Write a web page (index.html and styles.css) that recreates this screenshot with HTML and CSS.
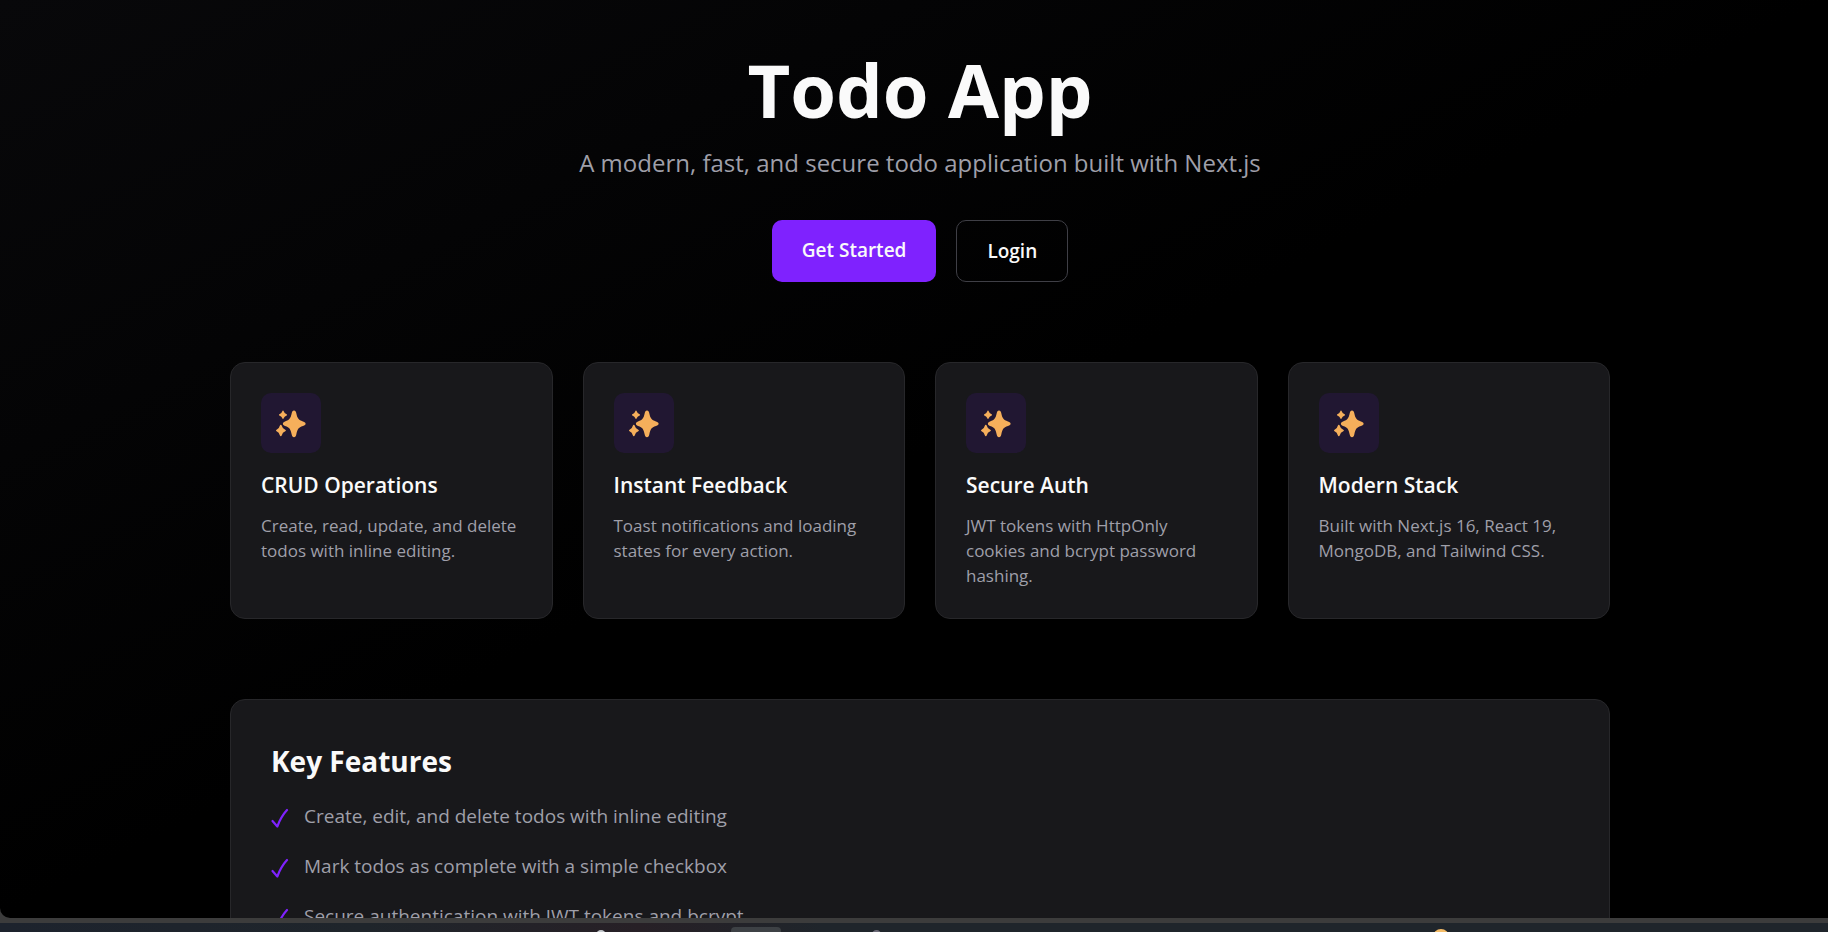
FILE: index.html
```html
<!DOCTYPE html>
<html lang="en">
<head>
    <meta charset="UTF-8">
    <meta name="viewport" content="width=device-width, initial-scale=1.0">
    <title>Todo App</title>
    <link rel="stylesheet" href="styles.css">
</head>
<body>
    <!-- icons shared by the cards and the list -->
    <svg width="0" height="0" class="sprite" aria-hidden="true">
        <symbol id="sparkles" viewBox="0 -1 30 30">
            <path d="M18 1.500 C19.300 1.500 19.900 2.600 20.300 4.200 C21.400 9.200 22.200 10.800 27 12.400 C28.700 13 29.600 13.700 29.600 14.700 C29.600 15.700 28.700 16.400 27 17 C22.200 18.600 21.400 20.200 20.300 25.500 C19.900 27.300 19.300 28.300 18 28.300 C16.700 28.300 16.100 27.300 15.700 25.500 C14.600 20.200 13.800 18.600 9 17 C7.600 16.500 6.900 15.700 6.900 14.700 C6.900 13.700 7.600 13 9 12.400 C13.800 10.800 14.600 9.200 15.700 4.200 C16.100 2.600 16.700 1.500 18 1.500Z"/>
            <path d="M7 1.500 Q7.500 1.500 7.700 2.300 Q8.400 4.600 10.200 5.100 Q11 5.400 11 5.900 Q11 6.400 10.200 6.700 Q8.400 7.200 7.700 9.300 Q7.500 10.100 7 10.100 Q6.500 10.100 6.300 9.300 Q5.600 7.200 3.800 6.700 Q3 6.400 3 5.900 Q3 5.400 3.800 5.100 Q5.600 4.600 6.300 2.300 Q6.500 1.500 7 1.500Z"/>
            <path d="M4.800 15.700 Q5.500 15.700 5.800 16.700 Q6.600 19.700 8.900 20.500 Q9.900 20.900 9.900 21.500 Q9.900 22.100 8.900 22.500 Q6.600 23.300 5.800 26.200 Q5.500 27.200 4.800 27.200 Q4.100 27.200 3.800 26.200 Q3 23.300 .9 22.500 Q0 22.100 0 21.500 Q0 20.900 .9 20.500 Q3 19.700 3.800 16.700 Q4.100 15.700 4.800 15.700Z"/>
        </symbol>
        <symbol id="check" viewBox="0 0 18 24">
            <path d="M1.500 17 L6.300 22.500 Q10 12.500 16 6" fill="none" stroke="currentColor" stroke-width="2.200" stroke-linecap="round" stroke-linejoin="round"/>
        </symbol>
    </svg>

    <div class="window">
        <main class="page">
            <header class="hero">
                <h1>Todo App</h1>
                <p class="subtitle">A modern, fast, and secure todo application built with Next.js</p>
                <div class="actions">
                    <a href="#register" class="btn btn-primary">Get Started</a>
                    <a href="#login" class="btn btn-outline">Login</a>
                </div>
            </header>

            <section class="cards">
                <article class="card">
                    <div class="icon"><svg><use href="#sparkles"/></svg></div>
                    <h3>CRUD Operations</h3>
                    <p>Create, read, update, and delete todos with inline editing.</p>
                </article>
                <article class="card">
                    <div class="icon"><svg><use href="#sparkles"/></svg></div>
                    <h3>Instant Feedback</h3>
                    <p>Toast notifications and loading states for every action.</p>
                </article>
                <article class="card">
                    <div class="icon"><svg><use href="#sparkles"/></svg></div>
                    <h3>Secure Auth</h3>
                    <p>JWT tokens with HttpOnly cookies and bcrypt password hashing.</p>
                </article>
                <article class="card">
                    <div class="icon"><svg><use href="#sparkles"/></svg></div>
                    <h3>Modern Stack</h3>
                    <p>Built with Next.js 16, React 19, MongoDB, and Tailwind CSS.</p>
                </article>
            </section>

            <section class="features">
                <h2>Key Features</h2>
                <ul>
                    <li><svg class="check"><use href="#check"/></svg>Create, edit, and delete todos with inline editing</li>
                    <li><svg class="check"><use href="#check"/></svg>Mark todos as complete with a simple checkbox</li>
                    <li><svg class="check"><use href="#check"/></svg>Secure authentication with JWT tokens and bcrypt</li>
                </ul>
            </section>
        </main>
    </div>

    <footer class="taskbar">
        <span class="task task-search"></span>
        <span class="task task-active"></span>
        <span class="task task-app"></span>
        <span class="task task-weather"></span>
    </footer>
</body>
</html>
```

FILE: styles.css
```css
* {
    box-sizing: border-box;
    margin: 0;
    padding: 0;
}

body {
    height: 100vh;
    display: flex;
    flex-direction: column;
    overflow: hidden;
    background-color: #3c3c3c;
    color: #fafafa;
    font-family: "Segoe UI", "Open Sans", "Noto Sans", sans-serif;
}

.sprite {
    position: absolute;
}

.window {
    flex: 1;
    min-height: 0;
    overflow: hidden;
    margin-bottom: 5px;
    border-bottom-left-radius: 10px;
    background: linear-gradient(to bottom right, #08080a, #000 50%);
}

.page {
    padding: 50px 218px 0 230px;
}

.hero {
    display: flex;
    flex-direction: column;
    align-items: center;
    margin-bottom: 80px;
    text-align: center;
}

h1 {
    font-size: 74px;
    line-height: 80px;
    font-weight: 700;
}

.subtitle {
    margin-top: 15px;
    font-size: 24px;
    line-height: 36px;
    color: #9f9fa9;
}

.actions {
    display: flex;
    gap: 20px;
    margin-top: 39px;
}

.btn {
    padding: 15px 30px;
    border-radius: 10px;
    font-size: 19px;
    line-height: 30px;
    font-weight: 600;
    color: #fafafa;
    text-decoration: none;
}

.btn-primary {
    background-color: #7f22fe;
}

.btn-outline {
    border: 1px solid #3f3f46;
}

.cards {
    display: grid;
    grid-template-columns: repeat(4, 1fr);
    gap: 30px;
    margin-bottom: 80px;
}

.card {
    padding: 30px;
    background-color: #18181b;
    border: 1px solid #27272a;
    border-radius: 15px;
}

.icon {
    display: flex;
    align-items: center;
    justify-content: center;
    width: 60px;
    height: 60px;
    margin-bottom: 15px;
    border-radius: 10px;
    background-color: #211732;
}

.icon svg {
    width: 30px;
    height: 30px;
    fill: #f5af5b;
}

.card h3 {
    margin-bottom: 10px;
    font-size: 21px;
    line-height: 35px;
    font-weight: 600;
}

.card p {
    font-size: 17px;
    line-height: 25px;
    color: #9f9fa9;
}

.features {
    padding: 40px;
    background-color: #18181b;
    border: 1px solid #27272a;
    border-radius: 15px;
}

.features h2 {
    margin-bottom: 19px;
    font-size: 28px;
    line-height: 42px;
    font-weight: 700;
}

.features ul {
    list-style: none;
}

.features li {
    display: flex;
    align-items: center;
    gap: 15px;
    margin-bottom: 20px;
    font-size: 19px;
    line-height: 30px;
    color: #9f9fa9;
}

.check {
    width: 18px;
    height: 24px;
    color: #7f22fe;
}

/* taskbar peeking out under the window */
.taskbar {
    position: relative;
    height: 9px;
    overflow: hidden;
    background: linear-gradient(to right, #1d232d, #1f252b 20%, #272026 35%, #1f252b 45%, #1f252b);
}

.task {
    position: absolute;
    border-radius: 50%;
}

.task-search {
    left: 32.6%;
    top: 7px;
    width: 10px;
    height: 10px;
    background-color: #c4c8cc;
}

.task-active {
    left: 40%;
    top: 4px;
    width: 50px;
    height: 20px;
    border-radius: 4px;
    background-color: #3d4145;
}

.task-app {
    left: 47.7%;
    top: 7px;
    width: 9px;
    height: 9px;
    background-color: #6d6b78;
}

.task-weather {
    left: 78.4%;
    top: 6px;
    width: 16px;
    height: 16px;
    background-color: #f5bd68;
}
```
